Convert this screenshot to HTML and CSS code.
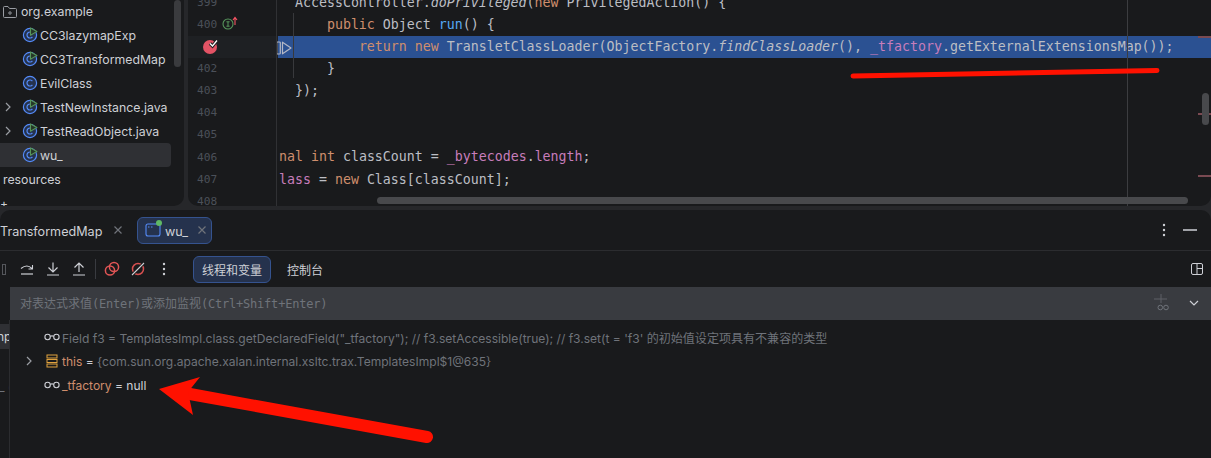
FILE: index.html
```html
<!DOCTYPE html>
<html lang="zh">
<head>
<meta charset="utf-8">
<title>Debugger</title>
<link rel="stylesheet" href="styles.css">
</head>
<body>
<div class="app">
  <svg width="0" height="0" class="defs">
    <defs>
      <symbol id="cls" viewBox="0 0 16 16">
        <circle cx="8" cy="8" r="6.6" fill="#25324d" stroke="#548af7" stroke-width="1.2"/>
        <path d="M10.4 6.2A3 3 0 1 0 10.4 9.8" fill="none" stroke="#548af7" stroke-width="1.2"/>
      </symbol>
      <symbol id="clsrun" viewBox="0 0 16 16">
        <circle cx="8" cy="8" r="6.6" fill="#25324d" stroke="#548af7" stroke-width="1.2"/>
        <path d="M10.4 6.2A3 3 0 1 0 10.4 9.8" fill="none" stroke="#548af7" stroke-width="1.2"/>
        <path d="M8.5 1V8.2L15 4.4Z" fill="#253627" stroke="#57965c" stroke-width="1.1" stroke-linejoin="round"/>
      </symbol>
      <symbol id="chev" viewBox="0 0 10 10">
        <path d="M3 1L7 5L3 9" fill="none" stroke="#9a9da3" stroke-width="1.2"/>
      </symbol>
      <symbol id="glasses" viewBox="0 0 16 8">
        <circle cx="3.6" cy="4" r="2.7" fill="none" stroke="#ced0d6" stroke-width="1.1"/>
        <circle cx="12.4" cy="4" r="2.7" fill="none" stroke="#ced0d6" stroke-width="1.1"/>
        <path d="M6.3 3.4Q8 2.4 9.7 3.4" fill="none" stroke="#ced0d6" stroke-width="1.1"/>
      </symbol>
      <symbol id="close" viewBox="0 0 10 10">
        <path d="M1.5 1.5L8.5 8.5M8.5 1.5L1.5 8.5" stroke="#6f737a" stroke-width="1.2"/>
      </symbol>
    </defs>
  </svg>

  <div class="top">
    <aside class="project">
      <div class="thumb-v"></div>
      <div class="tree-row lv0">
        <svg class="ico" width="16" height="16" viewBox="0 0 16 16"><path d="M1.5 3.500A1 1 0 0 1 2.500 2.500H6L7.500 4.500H13.500A1 1 0 0 1 14.500 5.500V12.500A1 1 0 0 1 13.500 13.500H2.500A1 1 0 0 1 1.500 12.500Z" fill="none" stroke="#9a9da3"/><circle cx="8" cy="9" r="1.2" fill="none" stroke="#9a9da3"/></svg>
        <span>org.example</span>
      </div>
      <div class="tree-row"><svg class="ico" width="16" height="16"><use href="#clsrun"/></svg><span>CC3lazymapExp</span></div>
      <div class="tree-row"><svg class="ico" width="16" height="16"><use href="#clsrun"/></svg><span>CC3TransformedMap</span></div>
      <div class="tree-row"><svg class="ico" width="16" height="16"><use href="#cls"/></svg><span>EvilClass</span></div>
      <div class="tree-row exp"><svg class="chev" width="10" height="10"><use href="#chev"/></svg><svg class="ico" width="16" height="16"><use href="#clsrun"/></svg><span>TestNewInstance.java</span></div>
      <div class="tree-row exp"><svg class="chev" width="10" height="10"><use href="#chev"/></svg><svg class="ico" width="16" height="16"><use href="#clsrun"/></svg><span>TestReadObject.java</span></div>
      <div class="tree-row sel"><svg class="ico" width="16" height="16"><use href="#clsrun"/></svg><span>wu_</span></div>
      <div class="tree-row res"><span>resources</span></div>
      <div class="tree-row res plus"><span>+</span></div>
    </aside>

    <main class="editor">
      <div class="margin-line"></div>
      <div class="fold-line"></div>
      <div class="guide"></div>
      <div class="line"><div class="gutter"><span class="num">399</span></div><pre class="code">  AccessController.<i>doPrivileged</i>(<b class="k">new</b> PrivilegedAction() {</pre></div>
      <div class="line"><div class="gutter"><span class="num">400</span>
        <svg class="impl" width="20" height="14" viewBox="0 0 20 14"><circle cx="7" cy="8" r="5" fill="none" stroke="#57965c" stroke-width="1.1"/><path d="M5.400 5.800H8.600M5.400 10.200H8.600M7 5.800V10.200" stroke="#57965c"/><path d="M14 9V2M12 4L14 1.500L16 4" fill="none" stroke="#f75464" stroke-width="1.1"/></svg>
      </div><pre class="code">      <b class="k">public</b> Object <b class="f">run</b>() {</pre></div>
      <div class="line cur"><div class="gutter">
        <svg class="bp" width="18" height="18" viewBox="0 0 18 18"><circle cx="9" cy="10" r="7" fill="#e35365"/><path d="M9 6.500L11.500 9L16 3.500" fill="none" stroke="#1e1f22" stroke-width="3.4"/><path d="M9 6.500L11.500 9L16 3.500" fill="none" stroke="#fff" stroke-width="1.3"/></svg>
      </div><pre class="code">          <b class="k">return</b> <b class="k">new</b> TransletClassLoader(ObjectFactory.<i>findClassLoader</i>(), <b class="m">_tfactory</b>.getExternalExtensionsMap());</pre>
        <svg class="exec" width="16" height="14" viewBox="0 0 16 14"><rect x="0.700" y="1" width="3.600" height="12" rx="0.800" fill="none" stroke="#b4b8c6" stroke-width="1.2"/><path d="M6.500 1.200L15 7L6.500 12.800Z" fill="none" stroke="#b4b8c6" stroke-width="1.2" stroke-linejoin="round"/></svg>
      </div>
      <div class="line"><div class="gutter"><span class="num">402</span></div><pre class="code">      }</pre></div>
      <div class="line"><div class="gutter"><span class="num">403</span></div><pre class="code">  });</pre></div>
      <div class="line"><div class="gutter"><span class="num">404</span></div><pre class="code"> </pre></div>
      <div class="line"><div class="gutter"><span class="num">405</span></div><pre class="code"> </pre></div>
      <div class="line"><div class="gutter"><span class="num">406</span></div><pre class="code"><b class="k">nal</b> <b class="k">int</b> classCount = <b class="m">_bytecodes</b>.<b class="m">length</b>;</pre></div>
      <div class="line"><div class="gutter"><span class="num">407</span></div><pre class="code"><b class="m">lass</b> = <b class="k">new</b> Class[classCount];</pre></div>
      <div class="line"><div class="gutter"><span class="num">408</span></div><pre class="code"> </pre></div>
      <div class="mark m1"></div><div class="mark m2"></div><div class="mark m3"></div>
      <div class="thumb-ev"></div>
      <div class="thumb-eh"></div>
    </main>
  </div>

  <section class="debug">
    <div class="tabs">
      <div class="tab-old"><span class="tab-txt">TransformedMap</span><svg width="10" height="10"><use href="#close"/></svg></div>
      <div class="tab-cur">
        <span class="tab-ico"><svg width="16" height="16" viewBox="0 0 16 16"><rect x="1" y="2" width="14" height="12" rx="2" fill="none" stroke="#548af7" stroke-width="1.1"/><path d="M3 5H4.500M6 5H7.500" stroke="#548af7"/></svg><i class="dot"></i></span>
        <span class="tab-txt">wu_</span>
        <svg class="tab-x" width="10" height="10"><use href="#close"/></svg>
      </div>
      <div class="spacer"></div>
      <svg class="tab-dots" width="4" height="14" viewBox="0 0 4 14"><circle cx="2" cy="2" r="1.2" fill="#ced0d6"/><circle cx="2" cy="7" r="1.2" fill="#ced0d6"/><circle cx="2" cy="12" r="1.2" fill="#ced0d6"/></svg>
      <div class="minus"></div>
    </div>
    <div class="toolbar">
      <div class="pause"></div>
      <svg class="tb" width="16" height="16" viewBox="0 0 16 16"><path d="M2 7.500Q8 2.500 13 7.500M13.500 4V8H9.500" fill="none" stroke="#ced0d6" stroke-width="1.1"/><path d="M2 13H14" stroke="#ced0d6" stroke-width="1.2"/></svg>
      <svg class="tb" width="16" height="16" viewBox="0 0 16 16"><path d="M8 1.500V10M3.500 6.500L8 11L12.500 6.500M2 14H14" fill="none" stroke="#ced0d6" stroke-width="1.2"/></svg>
      <svg class="tb" width="16" height="16" viewBox="0 0 16 16"><path d="M8 11V2.500M3.500 6.500L8 2L12.500 6.500M2 14H14" fill="none" stroke="#ced0d6" stroke-width="1.2"/></svg>
      <div class="sep"></div>
      <svg class="tb" width="16" height="16" viewBox="0 0 16 16"><circle cx="6" cy="9.500" r="4.600" fill="#191a1c" stroke="#e05555" stroke-width="1.5"/><circle cx="10" cy="6" r="4.600" fill="none" stroke="#e05555" stroke-width="1.5"/></svg>
      <svg class="tb" width="16" height="16" viewBox="0 0 16 16"><circle cx="8" cy="8" r="5.500" fill="none" stroke="#d65050" stroke-width="1.5"/><path d="M2 14L14 2" stroke="#191a1c" stroke-width="3"/><path d="M2 14L14 2" stroke="#ced0d6" stroke-width="1.1"/></svg>
      <svg class="tb tb-dots" width="4" height="14" viewBox="0 0 4 14"><circle cx="2" cy="2" r="1.2" fill="#ced0d6"/><circle cx="2" cy="7" r="1.2" fill="#ced0d6"/><circle cx="2" cy="12" r="1.2" fill="#ced0d6"/></svg>
      <div class="btn on">线程和变量</div>
      <div class="btn">控制台</div>
      <div class="spacer"></div>
      <svg class="layout" width="12" height="12" viewBox="0 0 12 12"><rect x="0.500" y="0.500" width="11" height="11" rx="1.500" fill="none" stroke="#ced0d6"/><path d="M6 0.500V11.500M6 5.500H11.500" stroke="#ced0d6"/></svg>
    </div>
    <div class="eval">
      <div class="eval-box">
        <span class="ph">对表达式求值<span class="lat">(Enter)</span>或添加监视<span class="lat">(Ctrl+Shift+Enter)</span></span>
        <div class="spacer"></div>
        <svg class="addw" width="15" height="17" viewBox="0 0 15 17"><path d="M7 0V9M0 5H13" stroke="#5e6166"/><circle cx="6.300" cy="13.500" r="2.300" fill="none" stroke="#6f737a"/><circle cx="12" cy="13.500" r="2.300" fill="none" stroke="#6f737a"/></svg>
        <svg class="chev-d" width="10" height="6" viewBox="0 0 10 6"><path d="M1 1L5 5L9 1" fill="none" stroke="#ced0d6" stroke-width="1.2"/></svg>
      </div>
    </div>
    <div class="vars">
      <div class="frames">
        <div class="frame-sel">np</div>
        <div class="frame-txt">_ (</div>
      </div>
      <div class="var-list">
        <div class="var"><svg class="gl" width="16" height="8"><use href="#glasses"/></svg><span class="dim">Field f3 = TemplatesImpl.class.getDeclaredField("_tfactory"); // f3.setAccessible(true); // f3.set(t = 'f3' 的初始值设定项具有不兼容的类型</span></div>
        <div class="var">
          <svg class="chev-r" width="10" height="10"><use href="#chev"/></svg>
          <svg class="stack" width="12" height="14" viewBox="0 0 12 14"><rect x="1" y="1" width="10" height="3" fill="none" stroke="#e0a23e"/><rect x="1" y="5.500" width="10" height="3" fill="none" stroke="#e0a23e"/><rect x="1" y="10" width="10" height="3" fill="none" stroke="#e0a23e"/></svg>
          <span class="name">this</span><span class="eq"> = </span><span class="dim">{com.sun.org.apache.xalan.internal.xsltc.trax.TemplatesImpl$1@635}</span>
        </div>
        <div class="var"><svg class="gl" width="16" height="8"><use href="#glasses"/></svg><span class="name">_tfactory</span><span class="eq"> = null</span></div>
      </div>
    </div>
  </section>

  <svg class="ink" width="1211" height="458" viewBox="0 0 1211 458">
    <path d="M853 76L1157 70.500" stroke="#ff1100" stroke-width="5" stroke-linecap="round" fill="none"/>
    <path d="M427 437L190 394" stroke="#ff1100" stroke-width="12" stroke-linecap="round" fill="none"/>
    <path d="M159 389L200 377L188 392L193 415Z" fill="#ff1100"/>
  </svg>
</div>
</body>
</html>
```

FILE: styles.css
```css
* { box-sizing: border-box; }
html, body { margin: 0; height: 100%; }
body { background: #1e1f22; overflow: hidden; font-family: Inter, "Noto Sans CJK SC", sans-serif; color: #ced0d6; }
.app { position: relative; width: 1211px; height: 458px; display: flex; flex-direction: column; background: #26272a; }
.defs { position: absolute; }
.spacer { flex: 1; }

.top { height: 206px; display: flex; gap: 4px; overflow: hidden; flex: none; }
.project { position: relative; width: 184px; background: #191a1c; border-bottom-right-radius: 10px; overflow: hidden; flex: none; }
.thumb-v { position: absolute; right: 3px; top: 0; width: 7px; height: 67px; background: #3a3b3e; border-radius: 4px; }
.tree-row { height: 24px; display: flex; align-items: center; padding-left: 22px; font-size: 12.3px; width: 171px; white-space: nowrap; }
.tree-row .ico { margin-right: 2px; flex: none; }
.tree-row.lv0 { padding-left: 2px; height: 23px; }
.tree-row.lv0 .ico { margin-right: 3px; }
.tree-row.exp { padding-left: 3px; }
.tree-row.exp .chev { margin-right: 9px; flex: none; }
.sel { background: #2f3034; border-radius: 0 4px 4px 0; color: #ced0d6; }
.res { padding-left: 3px; }
.plus { font-size: 12px; padding-left: 0; }

.editor { position: relative; flex: 1; background: #191a1c; border-bottom-left-radius: 10px; border-bottom-right-radius: 10px; overflow: hidden; }
.line { height: 22.15px; display: flex; font: 13.28px/22px "DejaVu Sans Mono", monospace; color: #bcbec4; position: relative; top: -8.5px; }
.gutter { position: relative; width: 90px; flex: none; display: flex; align-items: center; padding-left: 9px; }
.num { color: #4b5059; font-size: 11.2px; }
.code { margin: 0; font: inherit; white-space: pre; flex: 1; padding-left: 1px; }
.code b { font-weight: 400; }
.k { color: #cf8e6d; }
.f { color: #56a8f5; }
.m { color: #c77dbb; }
.cur .gutter { background: #1e2023; }
.cur .code { background: #2b5192; }
.impl { position: absolute; left: 33px; top: 2px; }
.bp { position: absolute; left: 13px; top: 1px; }
.exec { position: absolute; left: 88px; top: 5px; }
.margin-line { position: absolute; left: 939px; top: 0; bottom: 0; width: 1px; background: #3c3d40; z-index: 2; }
.fold-line { position: absolute; left: 88px; top: 0; bottom: 0; width: 1px; background: #303134; z-index: 2; }
.guide { position: absolute; left: 105px; top: 13px; height: 65px; width: 1px; background: #38393c; z-index: 2; }
.mark { position: absolute; right: 0; width: 13px; height: 2px; background: #7a4a52; z-index: 3; }
.m1 { top: 36px; }
.m2 { top: 113px; }
.m3 { top: 175px; }
.thumb-ev { position: absolute; left: 1014px; top: 93px; width: 7px; height: 32px; background: #48494c; border-radius: 4px; z-index: 4; }
.thumb-eh { position: absolute; left: 189px; top: 197px; width: 811px; height: 7px; background: #48494c; border-radius: 4px; z-index: 4; }

.debug { flex: 1; margin-top: 4px; background: #191a1c; display: flex; flex-direction: column; min-height: 0; border-radius: 10px 10px 0 0; }
.tabs { height: 41px; display: flex; align-items: center; border-bottom: 1px solid #2b2c2f; font-size: 12.6px; flex: none; }
.tab-txt { padding-top: 2px; }
.tab-old { display: flex; align-items: center; gap: 11px; width: 137px; }
.tab-cur { height: 27px; width: 75px; display: flex; align-items: center; padding: 0 4px 0 7px; gap: 4px; background: #25324d; border: 1px solid #35538f; border-radius: 6px; }
.tab-x { margin-left: auto; }
.tab-ico { position: relative; width: 16px; height: 16px; display: block; }
.tab-ico svg { display: block; }
.dot { position: absolute; right: -1px; top: -2px; width: 6px; height: 6px; border-radius: 50%; background: #5fb865; }
.tab-dots { margin-right: 17px; }
.minus { width: 14px; height: 2px; background: #a0a2a7; margin-right: 14px; }

.toolbar { height: 36px; display: flex; align-items: center; flex: none; font-size: 12px; padding-left: 2px; }
.pause { width: 4px; height: 11px; border: 1px solid #55575c; margin-right: 13px; }
.tb { margin-right: 10px; flex: none; }
.tb-dots { margin-left: 6px; }
.sep { width: 1px; height: 20px; background: #393b40; margin: 0 8px 0 -2px; }
.btn { height: 27px; display: flex; align-items: center; padding: 0 8px; border: 1px solid transparent; border-radius: 6px; margin-right: 7px; font-family: "Noto Sans CJK SC", sans-serif; }
.btn.on { background: #25324d; border-color: #35538f; margin-left: 17px; }
.layout { margin-right: 8px; }

.eval { height: 33px; flex: none; padding-left: 10px; }
.eval-box { height: 100%; background: #393b40; display: flex; align-items: center; padding: 0 0 2px 10px; }
.ph { font: 12px "DejaVu Sans Mono", "Noto Sans CJK SC", monospace; color: #6f737a; white-space: nowrap; }
.lat { letter-spacing: -0.22px; }
.addw { margin-right: 20px; }
.chev-d { margin-right: 12px; }

.vars { flex: 1; display: flex; min-height: 0; font-size: 12.05px; }
.frames { width: 10px; border-right: 1px solid #2b2c2f; padding-top: 4px; overflow: hidden; flex: none; white-space: nowrap; }
.frame-sel { height: 25px; width: 9px; background: #2f3034; line-height: 25px; text-indent: -3px; overflow: hidden; }
.frame-txt { margin-top: 30px; text-indent: -1px; overflow: hidden; color: #6f737a; }
.var-list { padding-top: 5px; flex: 1; }
.var { height: 24px; display: flex; align-items: center; padding-left: 34px; white-space: pre; position: relative; }
.gl { margin-right: 2px; flex: none; }
.chev-r { position: absolute; left: 14px; top: 7px; }
.stack { margin: 0 4px 0 2px; flex: none; }
.dim { color: #6f737a; }
.name { color: #cf8e6d; }
.eq { color: #ced0d6; }

.ink { position: absolute; left: 0; top: 0; pointer-events: none; z-index: 10; }
```
